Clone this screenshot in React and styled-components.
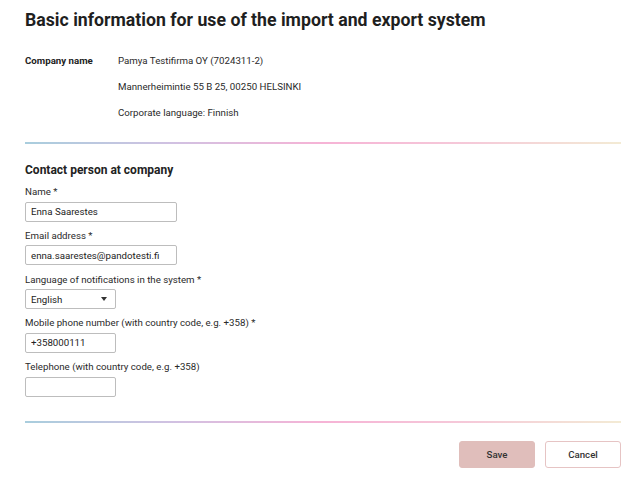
import React, { useState } from 'react'
import styled, { createGlobalStyle } from 'styled-components'

const Global = createGlobalStyle`
  body {
    margin: 0;
    background: #fff;
    font-family: Roboto, "Liberation Sans", sans-serif;
    color: #222;
  }
`

const Page = styled.div`
  padding: 8px 22px 0 25px;
`

const Title = styled.h1`
  margin: 0;
  font-size: 17.7px;
  font-weight: 700;
  line-height: 24px;
  color: #1f1f1f;
`

const InfoGrid = styled.div`
  display: grid;
  grid-template-columns: 93px 1fr;
  row-gap: 13px;
  margin-top: 22px;
  font-size: 9.7px;
  line-height: 13px;
`

const InfoLabel = styled.div`
  font-weight: 700;
  color: #222;
`

const InfoValue = styled.div`
  grid-column: 2;
  color: #2a2a2a;
`

const Divider = styled.div`
  height: 2px;
  margin: ${(p) => p.$m || '0'};
  opacity: 0.75;
  background: linear-gradient(90deg, #8cbdd2 0%, #c2acd8 25%, #f39ac8 50%, #f2b8cc 75%, #efe4c6 100%);
`

const Section = styled.h2`
  margin: 18px 0 0;
  font-size: 12px;
  font-weight: 700;
  line-height: 16px;
  color: #222;
`

const Field = styled.div`
  display: flex;
  flex-direction: column;
  align-items: flex-start;
  margin-top: ${(p) => p.$top || '7.3px'};
`

const Label = styled.label`
  font-size: 9.7px;
  line-height: 13px;
  color: #2a2a2a;
  margin-bottom: 3.5px;
`

const Input = styled.input`
  box-sizing: border-box;
  width: ${(p) => p.$w || '152px'};
  height: 20px;
  border: 1px solid #bdbdbd;
  border-radius: 2px;
  padding: 0 5px;
  font-family: inherit;
  font-size: 9.7px;
  color: #222;
  outline: none;
`

const SelectBox = styled.div`
  box-sizing: border-box;
  width: 91px;
  height: 20px;
  border: 1px solid #bdbdbd;
  border-radius: 2px;
  padding: 0 8px 0 5px;
  display: flex;
  align-items: center;
  justify-content: space-between;
  font-size: 9.7px;
  color: #222;
`

const Caret = styled.span`
  width: 0;
  height: 0;
  border-left: 3px solid transparent;
  border-right: 3px solid transparent;
  border-top: 4px solid #333;
`

const Actions = styled.div`
  display: flex;
  justify-content: flex-end;
  gap: 10px;
  margin-top: 18px;
`

const Button = styled.button`
  box-sizing: border-box;
  width: 76px;
  height: 27px;
  border-radius: 3px;
  font-family: inherit;
  font-size: 9.7px;
  font-weight: 500;
  color: #333;
  cursor: pointer;
  border: 1px solid ${(p) => (p.$primary ? '#e0bebb' : '#e6c4c4')};
  background: ${(p) => (p.$primary ? '#e0bebb' : '#fff')};
`

export default function App() {
  const [form, setForm] = useState({
    name: 'Enna Saarestes',
    email: 'enna.saarestes@pandotesti.fi',
    mobile: '+358000111',
    phone: '',
  })

  const handleChange = (e) => {
    const { name, value } = e.target
    setForm({ ...form, [name]: value })
  }

  return (
    <>
      <Global />
      <Page>
        <Title>Basic information for use of the import and export system</Title>
        <InfoGrid>
          <InfoLabel>Company name</InfoLabel>
          <InfoValue>Pamya Testifirma OY (7024311-2)</InfoValue>
          <InfoValue>Mannerheimintie 55 B 25, 00250 HELSINKI</InfoValue>
          <InfoValue>Corporate language: Finnish</InfoValue>
        </InfoGrid>
        <Divider $m="23px 0 0" />

        <Section>Contact person at company</Section>

        <Field $top="7px">
          <Label htmlFor="name">Name *</Label>
          <Input id="name" name="name" value={form.name} onChange={handleChange} />
        </Field>
        <Field>
          <Label htmlFor="email">Email address *</Label>
          <Input id="email" name="email" value={form.email} onChange={handleChange} />
        </Field>
        <Field>
          <Label>Language of notifications in the system *</Label>
          <SelectBox>
            English
            <Caret />
          </SelectBox>
        </Field>
        <Field>
          <Label htmlFor="mobile">Mobile phone number (with country code, e.g. +358) *</Label>
          <Input id="mobile" name="mobile" $w="91px" value={form.mobile} onChange={handleChange} />
        </Field>
        <Field>
          <Label htmlFor="phone">Telephone (with country code, e.g. +358)</Label>
          <Input id="phone" name="phone" $w="91px" value={form.phone} onChange={handleChange} />
        </Field>

        <Divider $m="24px 0 0" />

        <Actions>
          <Button $primary>Save</Button>
          <Button>Cancel</Button>
        </Actions>
      </Page>
    </>
  )
}
